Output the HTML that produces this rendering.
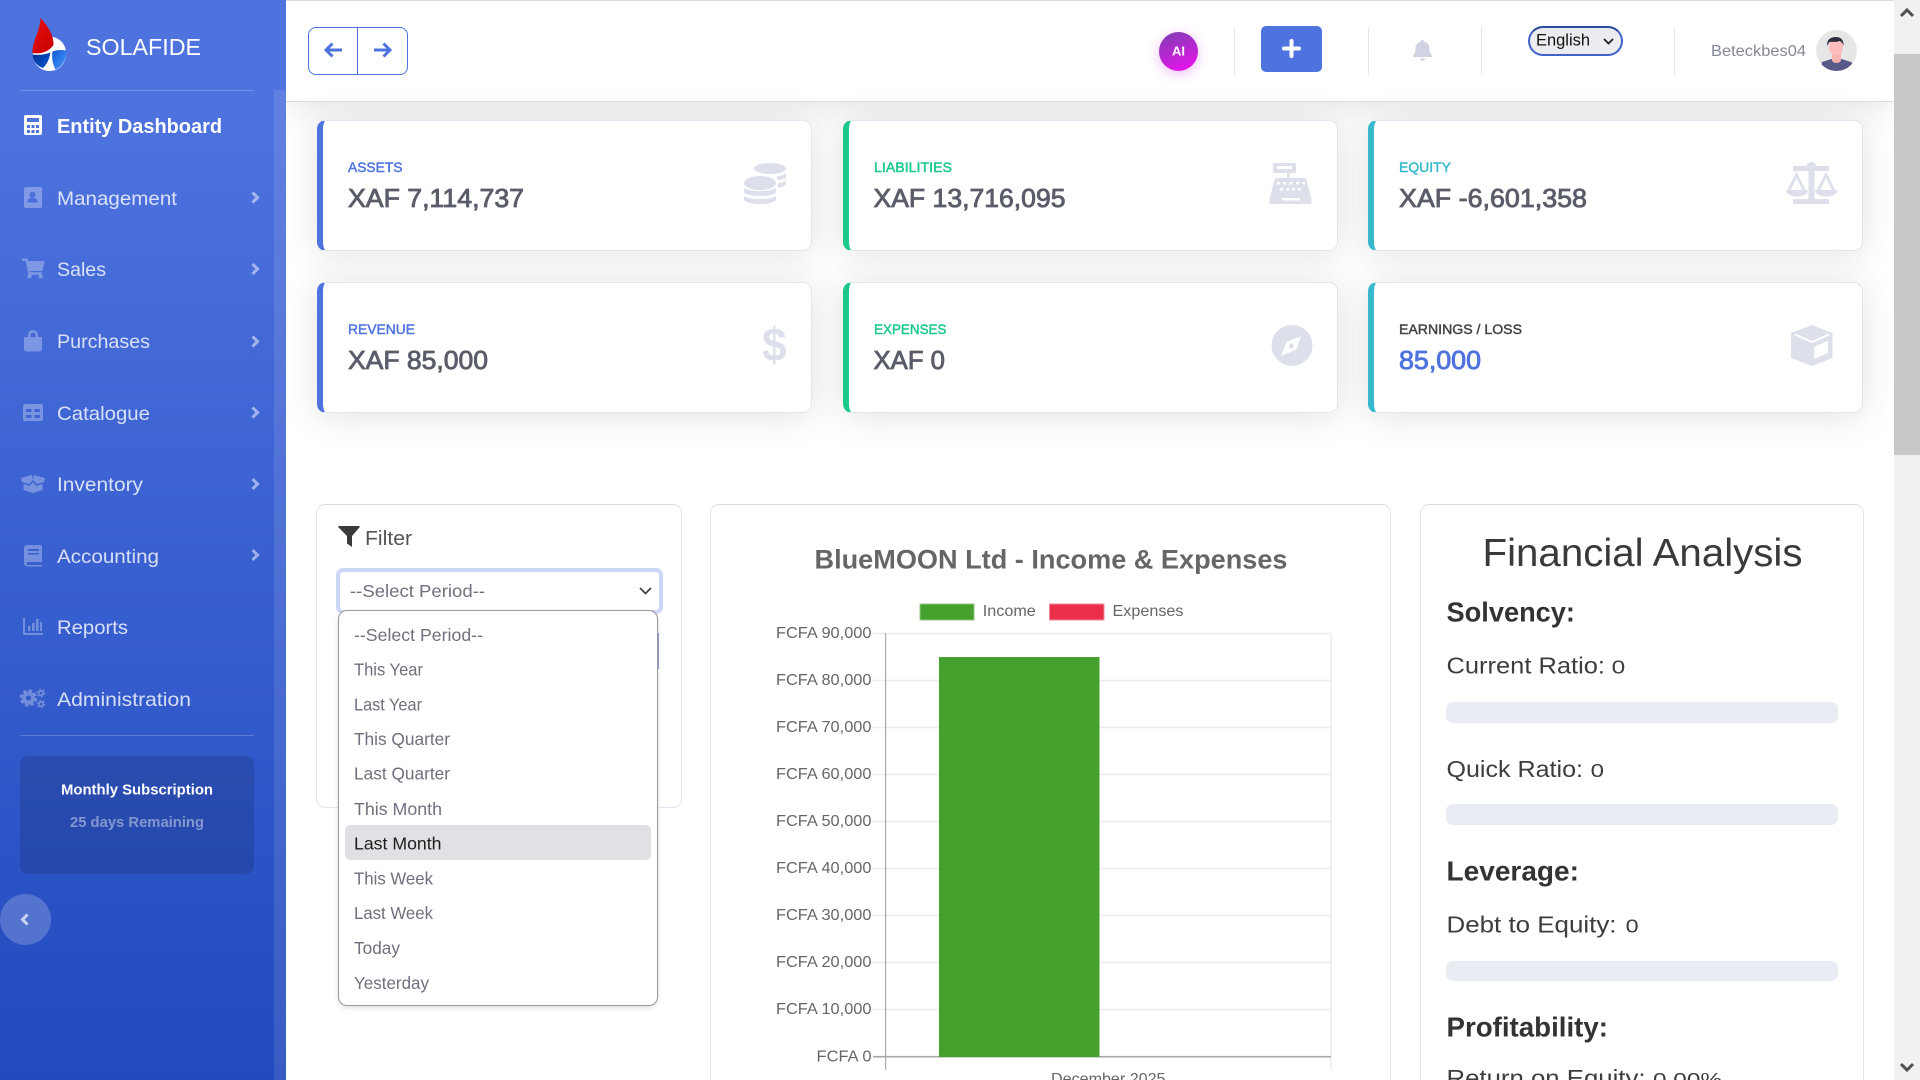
<!DOCTYPE html>
<html lang="en"><head><meta charset="utf-8"><title>SOLAFIDE - Entity Dashboard</title>
<style>
html,body{margin:0;padding:0;width:1920px;height:1080px;overflow:hidden;background:#fff;font-family:"Liberation Sans",sans-serif}
div{position:absolute;box-sizing:border-box}
#root{left:0;top:0;width:1920px;height:1080px;overflow:hidden}
.card{background:#fff;border:1px solid #e3e6f0;border-radius:9px;box-shadow:0 3px 34px rgba(58,59,69,.15);width:495px;height:131px}
.panel{background:#fff;border:1.5px solid #e3e6f0;border-top-color:#dcdde3;border-radius:9px}
.open{height:576px;border-bottom:0;border-radius:9px 9px 0 0}
.bar{left:1446px;width:392px;background:#eaecf4;border-radius:7px}
.vd{width:1px;top:27px;height:48px;background:#e3e6f0}
svg{position:absolute;left:0;top:0}
text{font-family:"Liberation Sans",sans-serif}
.m{font-size:19.5px;fill:#fff;fill-opacity:.8}
.o{font-size:17.6px;fill:#6e707e}
.l{font-size:13.5px;stroke-width:.45px}
.v{font-size:25.5px;fill:#5a5c69;stroke:#5a5c69;stroke-width:.85px}
.tk{font-size:15.8px;fill:#666}
.h{font-size:27.5px;font-weight:bold;fill:#333}
.r{font-size:23.5px;fill:#3d3d3d}
.z{font-size:18.5px;fill:#3d3d3d}
.ic{fill:#fff;fill-opacity:.3}
.big{fill:#dddfeb}
</style></head><body>
<div id="root">

<div style="left:286px;top:0;width:1608px;height:102px;background:#fff;border-top:1.5px solid #dddddd;border-bottom:1.5px solid #dddddd;box-shadow:0 3px 34px rgba(58,59,69,.15)"></div>

<div class="card" style="left:317px;top:120px;border-left:6px solid #4e73df"></div>
<div class="card" style="left:843px;top:120px;border-left:6px solid #1cc88a"></div>
<div class="card" style="left:1368px;top:120px;border-left:6px solid #36b9cc"></div>
<div class="card" style="left:317px;top:282px;border-left:6px solid #4e73df"></div>
<div class="card" style="left:843px;top:282px;border-left:6px solid #1cc88a"></div>
<div class="card" style="left:1368px;top:282px;border-left:6px solid #36b9cc"></div>

<div class="panel" style="left:316px;top:504px;width:365.500px;height:304px"></div>
<div class="panel open" style="left:710px;top:504px;width:681px"></div>
<div class="panel open" style="left:1420px;top:504px;width:444px"></div>

<div class="bar" style="top:702px;height:21px"></div>
<div class="bar" style="top:804px;height:21px"></div>
<div class="bar" style="top:961px;height:20px"></div>

<div style="left:336px;top:568px;width:327px;height:46px;background:#fff;border:4px solid #cdd8f6;border-radius:7px"></div>
<div style="left:650px;top:633px;width:9px;height:36px;background:#8fa5e6"></div>
<div style="left:338px;top:610px;width:320px;height:396px;background:#fff;border:1px solid #9a9a9a;border-radius:9px;box-shadow:0 2px 5px rgba(0,0,0,.12)"></div>
<div style="left:345px;top:825px;width:306px;height:35px;background:#e0e0e5;border-radius:5px"></div>

<div style="left:0;top:0;width:286px;height:1080px;background:linear-gradient(180deg,#4e73df 10%,#224abe 100%)"></div>
<div style="left:274px;top:90px;width:12px;height:990px;background:rgba(255,255,255,.1)"></div>
<div style="left:20px;top:90px;width:234px;height:1px;background:rgba(255,255,255,.2)"></div>
<div style="left:20px;top:735px;width:234px;height:1px;background:rgba(255,255,255,.2)"></div>
<div style="left:20px;top:756px;width:234px;height:118px;background:rgba(0,0,0,.12);border-radius:8px"></div>
<div style="left:0;top:894px;width:51px;height:51px;border-radius:50%;background:rgba(255,255,255,.2)"></div>

<div style="left:308px;top:27px;width:100px;height:48px;border:1px solid #4e73df;border-radius:8px;background:#fff"></div>
<div style="left:357px;top:27px;width:1px;height:48px;background:#4e73df"></div>
<div style="left:1159px;top:32px;width:39px;height:39px;border-radius:50%;background:linear-gradient(160deg,#7d3fb0,#f00ff0);box-shadow:0 3px 12px rgba(190,40,220,.3)"></div>
<div class="vd" style="left:1234px"></div><div class="vd" style="left:1368px"></div><div class="vd" style="left:1481px"></div><div class="vd" style="left:1674px"></div>
<div style="left:1261px;top:26px;width:61px;height:46px;background:#4e73df;border-radius:5px"></div>
<div style="left:1528px;top:26px;width:95px;height:30px;background:#ebebf0;border:2px solid #3f63c8;border-top-color:#2a4a9a;border-radius:15px"></div>

<div style="left:1894px;top:0;width:26px;height:1080px;background:#f1f1f1"></div>
<div style="left:1894px;top:54px;width:26px;height:401px;background:#c8c8c8"></div>

<svg width="1920" height="1080" viewBox="0 0 1920 1080" xmlns="http://www.w3.org/2000/svg">
<defs>
<linearGradient id="rd" x1="0" y1="0" x2="1" y2="1"><stop offset="0" stop-color="#f01010"/><stop offset="1" stop-color="#c00000"/></linearGradient>
<linearGradient id="bl" x1="0" y1="0" x2="1" y2="1"><stop offset="0" stop-color="#0f58d8"/><stop offset="1" stop-color="#4a9af8"/></linearGradient>
<linearGradient id="db" x1="0" y1="0" x2="1" y2="1"><stop offset="0" stop-color="#002f90"/><stop offset="1" stop-color="#0f58d8"/></linearGradient>
<clipPath id="av"><circle cx="1836.5" cy="50.5" r="20.5"/></clipPath>
</defs>

<!-- logo -->
<path d="M32.500 54C33 64 41 71 49 71C60 71 66 63 66 53C66 45 61 39 53 37L45 45Z" fill="#fff"/>
<path d="M66 50.500C61 49.500 56 50 52.500 51.500C51.500 58 52.500 64 55.500 69.500C62 67 66 60 66 53Z" fill="url(#bl)"/>
<path d="M32.500 54.500C38 55.500 45 54.500 50.500 52.500C49.500 58 47.500 64 43 68C36.500 66 32.500 60 32.500 54.500Z" fill="url(#db)"/>
<path d="M40.500 18C40 32 32 41 32.500 53C41 54.500 49 51.500 53.500 45C54 35 47 25 40.500 18Z" fill="url(#rd)"/>
<text x="86" y="55" font-size="23.5" fill="#fff" textLength="115" lengthAdjust="spacingAndGlyphs">SOLAFIDE</text>

<!-- sidebar icons -->
<path d="M26 115h14a2 2 0 0 1 2 2v16a2 2 0 0 1-2 2H26a2 2 0 0 1-2-2v-16a2 2 0 0 1 2-2z" fill="#fff"/>
<g fill="#4e73df"><rect x="27" y="118" width="12" height="4"/><rect x="27" y="125" width="3" height="3"/><rect x="31.5" y="125" width="3" height="3"/><rect x="36" y="125" width="3" height="3"/><rect x="27" y="130" width="3" height="3"/><rect x="31.5" y="130" width="3" height="3"/><rect x="36" y="130" width="3" height="3"/></g>
<path class="ic" fill-rule="evenodd" d="M26 187h14a2 2 0 0 1 2 2v17a2 2 0 0 1-2 2H26a2 2 0 0 1-2-2v-17a2 2 0 0 1 2-2zM32.500 192a3 3 0 1 0 .01 0zM27.500 202.500h10v-1.500c0-2-2-3-5-3s-5 1-5 3z"/>
<svg x="22" y="258" width="22.5" height="21" viewBox="0 0 576 512"><path class="ic" d="M528.12 301.319l47.273-208C578.806 78.301 567.391 64 551.99 64H159.208l-9.166-44.81C147.758 8.021 137.93 0 126.529 0H24C10.745 0 0 10.745 0 24v16c0 13.255 10.745 24 24 24h69.883l70.248 343.435C147.325 417.1 136 435.222 136 456c0 30.928 25.072 56 56 56s56-25.072 56-56c0-15.674-6.447-29.835-16.824-40h209.647C430.447 426.165 424 440.326 424 456c0 30.928 25.072 56 56 56s56-25.072 56-56c0-22.172-12.888-41.332-31.579-50.405l5.517-24.276c3.413-15.018-8.002-29.319-23.403-29.319H218.117l-6.545-32h293.145c11.206 0 20.92-7.754 23.403-18.681z"/></svg>
<path class="ic" fill-rule="evenodd" d="M28 337v-2a5 5 0 0 1 10 0v2h4v12a2.500 2.500 0 0 1-2.500 2.500h-13A2.500 2.500 0 0 1 24 349v-12zM30.500 337h5v-2a2.500 2.500 0 0 0-5 0z"/>
<path class="ic" fill-rule="evenodd" d="M25 404h16a2 2 0 0 1 2 2v13a2 2 0 0 1-2 2H25a2 2 0 0 1-2-2v-13a2 2 0 0 1 2-2zM26 409v3h5.500v-3zM34.500 409v3H40v-3zM26 415v3h5.500v-3zM34.500 415v3H40v-3z"/>
<path class="ic" d="M21 478L32 475 33 480 29 484 22 482ZM45 478L34 475 33 480 37 484 44 482ZM23.500 484L29.500 486 33 482 36.500 486 42.500 484V490L33 493 23.500 490Z"/>
<path class="ic" d="M27 545h13a2 2 0 0 1 2 2v15H28a1.500 1.500 0 0 0 0 3h14v1.500H27.500A3.500 3.500 0 0 1 24 563v-15a3 3 0 0 1 3-3zM28 549v2h11v-2zM28 553v1.500h11V553z"/>
<path class="ic" d="M23 618h2v15h18v2H23zM28 626h2.500v5H28zM32 623h2.500v8H32zM36 619h2.500v12H36zM40 622h2v9h-2z"/>
<g fill="none" stroke="#fff" stroke-opacity=".3">
<circle cx="28.500" cy="698" r="4.500" stroke-width="4"/><circle cx="28.500" cy="698" r="7.500" stroke-width="2.500" stroke-dasharray="3.500 2.390"/>
<circle cx="41" cy="693" r="2.200" stroke-width="1.800"/><circle cx="41" cy="693" r="3.800" stroke-width="1.200" stroke-dasharray="2 1.980"/>
<circle cx="41" cy="704" r="2.200" stroke-width="1.800"/><circle cx="41" cy="704" r="3.800" stroke-width="1.200" stroke-dasharray="2 1.980"/>
</g>

<!-- sidebar text -->
<text x="57" y="133" font-size="20" font-weight="bold" fill="#fff" textLength="165" lengthAdjust="spacingAndGlyphs">Entity Dashboard</text>
<text class="m" x="57" y="205" textLength="120" lengthAdjust="spacingAndGlyphs">Management</text>
<text class="m" x="57" y="276" textLength="49" lengthAdjust="spacingAndGlyphs">Sales</text>
<text class="m" x="57" y="348" textLength="93" lengthAdjust="spacingAndGlyphs">Purchases</text>
<text class="m" x="57" y="420" textLength="93" lengthAdjust="spacingAndGlyphs">Catalogue</text>
<text class="m" x="57" y="491" textLength="86" lengthAdjust="spacingAndGlyphs">Inventory</text>
<text class="m" x="57" y="563" textLength="102" lengthAdjust="spacingAndGlyphs">Accounting</text>
<text class="m" x="57" y="634" textLength="71" lengthAdjust="spacingAndGlyphs">Reports</text>
<text class="m" x="57" y="706" textLength="134" lengthAdjust="spacingAndGlyphs">Administration</text>
<g fill="none" stroke="#fff" stroke-opacity=".5" stroke-width="3">
<path d="M252.500 192.500l5 5-5 5M252.500 264l5 5-5 5M252.500 336.500l5 5-5 5M252.500 407.500l5 5-5 5M252.500 479l5 5-5 5M252.500 550l5 5-5 5"/></g>
<text x="61" y="794.500" font-size="15" font-weight="bold" fill="#fff" textLength="152" lengthAdjust="spacingAndGlyphs">Monthly Subscription</text>
<text x="70" y="827" font-size="15" font-weight="bold" fill="#fff" fill-opacity=".42" textLength="134" lengthAdjust="spacingAndGlyphs">25 days Remaining</text>
<path d="M27.500 914.500l-5 5 5 5" fill="none" stroke="#fff" stroke-opacity=".7" stroke-width="3"/>

<!-- topbar -->
<g fill="none" stroke="#4e73df" stroke-width="3"><path d="M342 50h-15M332.500 43.500l-6.500 6.500 6.500 6.500M374 50h15M383.500 43.500l6.500 6.500-6.500 6.500"/></g>
<text x="1172" y="55.500" font-size="12.500" font-weight="bold" fill="#fff" textLength="13" lengthAdjust="spacingAndGlyphs">AI</text>
<path d="M1291.500 41v15M1284 48.500h15" stroke="#fff" stroke-width="4" stroke-linecap="round"/>
<path d="M1422.500 40c1 0 1.800.800 1.800 1.800 3.500.800 5.200 3.700 5.200 7 0 4 1.200 5.500 2.500 7v1.200h-19v-1.200c1.300-1.500 2.500-3 2.500-7 0-3.300 1.700-6.200 5.200-7 0-1 .8-1.800 1.800-1.800zM1420 58.500h5a2.500 2.500 0 0 1-5 0z" fill="#d1d3e2"/>
<text x="1536" y="45.500" font-size="16.500" fill="#111" textLength="54" lengthAdjust="spacingAndGlyphs">English</text>
<path d="M1604 39l4.500 4.500 4.500-4.500" fill="none" stroke="#222" stroke-width="1.800"/>
<text x="1711" y="56" font-size="16" fill="#858796" textLength="95" lengthAdjust="spacingAndGlyphs">Beteckbes04</text>
<g clip-path="url(#av)">
<circle cx="1836.500" cy="50.500" r="20.500" fill="#e6e6e6"/>
<path d="M1821 71l1-9 11-3.500h7l11 3.500 4 4v6z" fill="#575a89"/>
<path d="M1832 52h9v8c0 1.500-2 3-4.500 3s-4.500-1.500-4.500-3z" fill="#f8b4ae"/>
<ellipse cx="1836" cy="47" rx="7" ry="8.500" fill="#fbbebe"/>
<path d="M1827.500 46c-1.500-6 3-9 8.500-9 5 0 8 3 7.500 9-.5-3-2.500-4.500-4-5-3 1.500-8 .5-10 1-1 1-1.500 2.500-2 4z" fill="#2f2e41"/>
</g>
<path d="M1901 16l6-6 6 6" fill="none" stroke="#505050" stroke-width="3"/>
<path d="M1901 1064l6 6 6-6" fill="none" stroke="#505050" stroke-width="3"/>

<!-- stat cards -->
<text class="l" x="348" y="172" fill="#4e73df" stroke="#4e73df" textLength="54.500" lengthAdjust="spacingAndGlyphs">ASSETS</text>
<text class="v" x="348" y="207" textLength="176" lengthAdjust="spacingAndGlyphs">XAF 7,114,737</text>
<text class="l" x="874" y="172" fill="#1cc88a" stroke="#1cc88a" textLength="78" lengthAdjust="spacingAndGlyphs">LIABILITIES</text>
<text class="v" x="873.500" y="207" textLength="192" lengthAdjust="spacingAndGlyphs">XAF 13,716,095</text>
<text class="l" x="1399" y="172" fill="#36b9cc" stroke="#36b9cc" textLength="52" lengthAdjust="spacingAndGlyphs">EQUITY</text>
<text class="v" x="1399" y="207" textLength="188" lengthAdjust="spacingAndGlyphs">XAF -6,601,358</text>
<text class="l" x="348" y="334" fill="#4e73df" stroke="#4e73df" textLength="67" lengthAdjust="spacingAndGlyphs">REVENUE</text>
<text class="v" x="348" y="369" textLength="140" lengthAdjust="spacingAndGlyphs">XAF 85,000</text>
<text class="l" x="874" y="334" fill="#1cc88a" stroke="#1cc88a" textLength="72.500" lengthAdjust="spacingAndGlyphs">EXPENSES</text>
<text class="v" x="873.500" y="369" textLength="71.500" lengthAdjust="spacingAndGlyphs">XAF 0</text>
<text class="l" x="1399" y="334" fill="#444" stroke="#444" textLength="123" lengthAdjust="spacingAndGlyphs">EARNINGS / LOSS</text>
<text class="v" x="1399" y="369" style="fill:#4e73df;stroke:#4e73df" textLength="82" lengthAdjust="spacingAndGlyphs">85,000</text>

<!-- card icons -->
<g class="big">
<ellipse cx="770" cy="168.500" rx="16" ry="5.500"/>
<path d="M777 176c4 0 7-1 9-2.500v4c-2 1.500-5 2.500-9 2.500zM778 183c3 0 6-1 8-2.500v4c-1.500 1.500-4 2.500-8 3.500z"/>
<ellipse cx="760" cy="183" rx="16" ry="7"/>
<path d="M744 188c3 2 8 3 16 3s13-1 16-3v4.500c-2 2-8 3.500-16 3.500s-14-1.500-16-3.500zM744 196c3 2 8 3 16 3s13-1 16-3v4c-2 2.500-8 4-16 4s-14-1.500-16-4z"/>
</g>
<path class="big" fill-rule="evenodd" d="M1273 163h23v10h-9v5h17c1 0 2 .700 2.500 2l5 19v3a2 2 0 0 1-2 2h-38a2 2 0 0 1-2-2v-3l5-19c.5-1.300 1.500-2 2.500-2h12.500v-5h-16.500zM1277 166v3h15v-3zM1282 198v2.500h18V198zM1277 182v2.500h3V182zM1283 182v2.500h3V182zM1289.500 182v2.500h3V182zM1296 182v2.500h3V182zM1302 182v2.500h3V182zM1280 188v2.500h3V188zM1286 188v2.500h3V188zM1292 188v2.500h3V188zM1298 188v2.500h3V188z"/>
<g class="big">
<rect x="1793" y="166" width="36" height="5"/><circle cx="1811.500" cy="167" r="5"/>
<rect x="1808.500" y="167" width="6" height="33"/><rect x="1793" y="199" width="36" height="5" rx="1"/>
<path d="M1786 190h22c0 4-5 6.500-11 6.500s-11-2.500-11-6.500z"/><path d="M1815 190h22.500c0 4-5 6.500-11 6.500s-11.500-2.500-11.500-6.500z"/>
</g>
<g fill="none" stroke="#dddfeb" stroke-width="3"><path d="M1788.500 191l8-16 8 16M1818 191l8-16 8 16"/></g>
<text x="762" y="361" font-size="47" font-weight="bold" fill="#dddfeb" textLength="24.500" lengthAdjust="spacingAndGlyphs">$</text>
<ellipse class="big" cx="1292" cy="345.500" rx="20.500" ry="20.500"/>
<path d="M1301 336l-4.500 13.500L1281 356l5.500-14z" fill="#fff"/><circle cx="1291.500" cy="346" r="2.500" fill="#dddfeb"/>
<path class="big" d="M1812 325l20.500 8v25L1812 366l-21-8v-25z"/>
<path d="M1814.300 346.700l13.700-6v12l-13.700 6.600z" fill="#fff"/>
<path d="M1795 334.500l17 7.500 17-7.500" fill="none" stroke="#fff" stroke-width="2"/>

<!-- filter -->
<path d="M338.500 526h20.500c.7 0 1 .8.500 1.400L352 536v11l-5-3.500V536l-8.500-8.600c-.5-.6-.2-1.400.5-1.400z" fill="#3a3a3a"/>
<text x="365" y="545" font-size="20" fill="#555" textLength="47" lengthAdjust="spacingAndGlyphs">Filter</text>
<text x="350" y="597" font-size="17.800" fill="#6e707e" textLength="135" lengthAdjust="spacingAndGlyphs">--Select Period--</text>
<path d="M640 588l5.500 5.500 5.500-5.500" fill="none" stroke="#444" stroke-width="1.800"/>
<text class="o" x="354" y="641" textLength="129" lengthAdjust="spacingAndGlyphs">--Select Period--</text>
<text class="o" x="354" y="675.700" textLength="69" lengthAdjust="spacingAndGlyphs">This Year</text>
<text class="o" x="354" y="710.500" textLength="68" lengthAdjust="spacingAndGlyphs">Last Year</text>
<text class="o" x="354" y="745" textLength="96" lengthAdjust="spacingAndGlyphs">This Quarter</text>
<text class="o" x="354" y="779.700" textLength="96" lengthAdjust="spacingAndGlyphs">Last Quarter</text>
<text class="o" x="354" y="814.900" textLength="88" lengthAdjust="spacingAndGlyphs">This Month</text>
<text class="o" x="354" y="849.700" style="fill:#1e1e1e" textLength="87.500" lengthAdjust="spacingAndGlyphs">Last Month</text>
<text class="o" x="354" y="884.500" textLength="79" lengthAdjust="spacingAndGlyphs">This Week</text>
<text class="o" x="354" y="919" textLength="79" lengthAdjust="spacingAndGlyphs">Last Week</text>
<text class="o" x="354" y="954" textLength="46" lengthAdjust="spacingAndGlyphs">Today</text>
<text class="o" x="354" y="988.800" textLength="75" lengthAdjust="spacingAndGlyphs">Yesterday</text>

<!-- chart -->
<text x="814.500" y="568.500" font-size="27" font-weight="bold" fill="#666" textLength="473" lengthAdjust="spacingAndGlyphs">BlueMOON Ltd - Income &amp; Expenses</text>
<rect x="920" y="604" width="54" height="16" fill="#46a02e" stroke="#8cc97c"/>
<rect x="1049.500" y="604" width="54.500" height="16" fill="#ea2f4b" stroke="#f28a98"/>
<text class="tk" x="982.800" y="616" textLength="53" lengthAdjust="spacingAndGlyphs">Income</text>
<text class="tk" x="1112.500" y="616" textLength="71" lengthAdjust="spacingAndGlyphs">Expenses</text>
<g stroke="#ececec" stroke-width="1.500">
<path d="M873 633.500h458M873 680.500h458M873 727.500h458M873 774.500h458M873 821.500h458M873 868.500h458M873 915.500h458M873 962.500h458M873 1009.500h458"/>
<path d="M1331 633v437"/></g>
<path d="M885.600 633v437" stroke="#aaa" stroke-width="1.200"/>
<path d="M873 1056.700h458" stroke="#a6a6a6" stroke-width="1.600"/>
<rect x="939" y="657" width="160.500" height="400" fill="#46a02e"/>
<text class="tk" x="776" y="638" textLength="95.500" lengthAdjust="spacingAndGlyphs">FCFA 90,000</text>
<text class="tk" x="776" y="685" textLength="95.500" lengthAdjust="spacingAndGlyphs">FCFA 80,000</text>
<text class="tk" x="776" y="732" textLength="95.500" lengthAdjust="spacingAndGlyphs">FCFA 70,000</text>
<text class="tk" x="776" y="779" textLength="95.500" lengthAdjust="spacingAndGlyphs">FCFA 60,000</text>
<text class="tk" x="776" y="826" textLength="95.500" lengthAdjust="spacingAndGlyphs">FCFA 50,000</text>
<text class="tk" x="776" y="873" textLength="95.500" lengthAdjust="spacingAndGlyphs">FCFA 40,000</text>
<text class="tk" x="776" y="920" textLength="95.500" lengthAdjust="spacingAndGlyphs">FCFA 30,000</text>
<text class="tk" x="776" y="967" textLength="95.500" lengthAdjust="spacingAndGlyphs">FCFA 20,000</text>
<text class="tk" x="776" y="1014" textLength="95.500" lengthAdjust="spacingAndGlyphs">FCFA 10,000</text>
<text class="tk" x="816.500" y="1061.500" textLength="55" lengthAdjust="spacingAndGlyphs">FCFA 0</text>
<text class="tk" x="1051" y="1084" textLength="114.500" lengthAdjust="spacingAndGlyphs">December 2025</text>

<!-- analysis -->
<text x="1482.500" y="566" font-size="39" fill="#3a3a3a" textLength="320" lengthAdjust="spacingAndGlyphs">Financial Analysis</text>
<text class="h" x="1446.500" y="621.700" textLength="128.500" lengthAdjust="spacingAndGlyphs">Solvency:</text>
<text class="r" x="1446.500" y="673.700" textLength="158.500" lengthAdjust="spacingAndGlyphs">Current Ratio:</text>
<text class="z" x="1611.700" y="673.700" textLength="13.600" lengthAdjust="spacingAndGlyphs">0</text>
<text class="r" x="1446.500" y="776.800" textLength="136.500" lengthAdjust="spacingAndGlyphs">Quick Ratio:</text>
<text class="z" x="1590.700" y="776.800" textLength="13.400" lengthAdjust="spacingAndGlyphs">0</text>
<text class="h" x="1446.500" y="880.700" textLength="132.500" lengthAdjust="spacingAndGlyphs">Leverage:</text>
<text class="r" x="1446.500" y="932.600" textLength="170" lengthAdjust="spacingAndGlyphs">Debt to Equity:</text>
<text class="z" x="1625.700" y="932.600" textLength="13" lengthAdjust="spacingAndGlyphs">0</text>
<text class="h" x="1446.500" y="1036.500" textLength="161.500" lengthAdjust="spacingAndGlyphs">Profitability:</text>
<text class="r" x="1446.500" y="1086" textLength="199" lengthAdjust="spacingAndGlyphs">Return on Equity:</text>
<text class="z" x="1653" y="1086" textLength="69" lengthAdjust="spacingAndGlyphs">0.00%</text>
</svg>
</div>
</body></html>
